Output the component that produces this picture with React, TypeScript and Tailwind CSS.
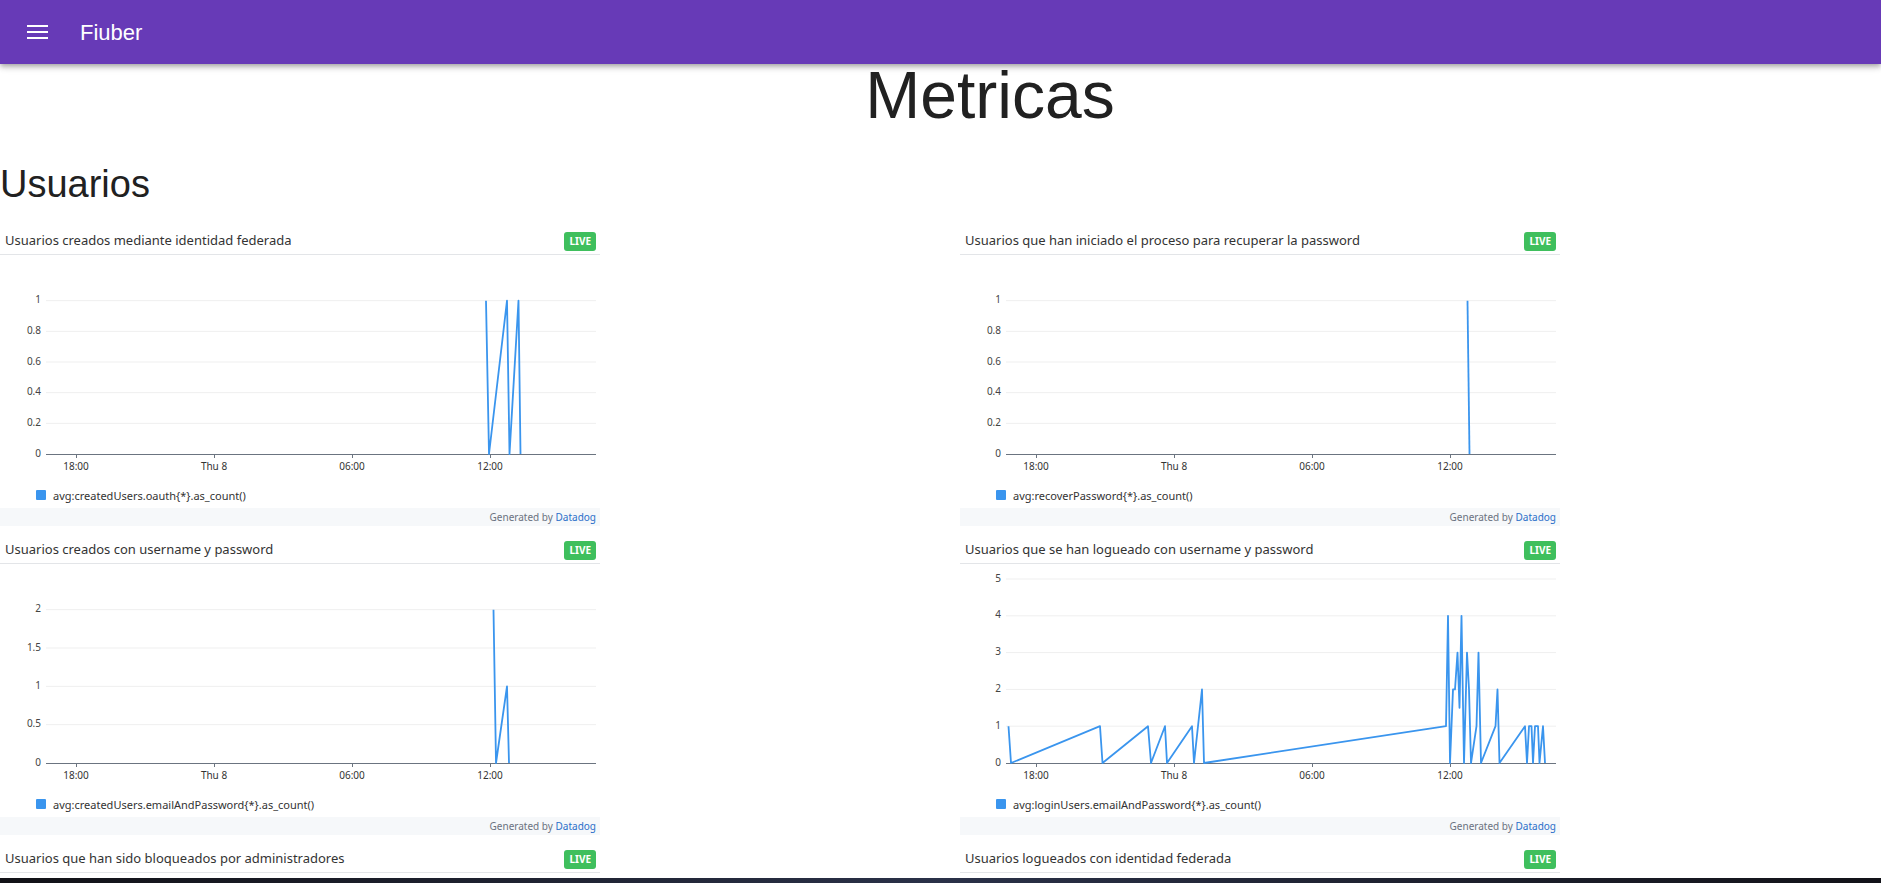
type Pt = [number, number];

interface Metric {
  title: string;
  query: string;
  max: number;
  ticks: number[];
  points: Pt[];
}

// eje x: 18:00 en x=76, 6h = 138px
const timeLabels: { x: number; label: string }[] = [
  { x: 76, label: "18:00" },
  { x: 214, label: "Thu 8" },
  { x: 352, label: "06:00" },
  { x: 490, label: "12:00" },
];

const metrics: Metric[] = [
  {
    title: "Usuarios creados mediante identidad federada",
    query: "avg:createdUsers.oauth{*}.as_count()",
    max: 1.2,
    ticks: [0, 0.2, 0.4, 0.6, 0.8, 1],
    points: [[486, 1], [489, 0], [507, 1], [509.5, 0], [518.5, 1], [520.5, 0]],
  },
  {
    title: "Usuarios que han iniciado el proceso para recuperar la password",
    query: "avg:recoverPassword{*}.as_count()",
    max: 1.2,
    ticks: [0, 0.2, 0.4, 0.6, 0.8, 1],
    points: [[507.5, 1], [509.5, 0]],
  },
  {
    title: "Usuarios creados con username y password",
    query: "avg:createdUsers.emailAndPassword{*}.as_count()",
    max: 2.4,
    ticks: [0, 0.5, 1, 1.5, 2],
    points: [[493.5, 2], [496, 0], [507, 1], [509, 0]],
  },
  {
    title: "Usuarios que se han logueado con username y password",
    query: "avg:loginUsers.emailAndPassword{*}.as_count()",
    max: 5,
    ticks: [0, 1, 2, 3, 4, 5],
    points: [
      [48.5, 1], [51, 0], [140, 1], [142.5, 0], [188, 1], [191, 0], [205, 1], [207, 0],
      [232, 1], [234, 0], [242, 2], [244, 0], [486, 1], [488, 4], [490, 0], [493, 2],
      [495, 2], [497.5, 3], [499.5, 1.5], [501.5, 4], [504, 0], [507, 3], [509, 2], [511, 0],
      [516.5, 1], [518.5, 3], [521, 0], [535.5, 1], [537.5, 2], [539.5, 0], [565, 1],
      [567, 0], [569, 1], [571.5, 1], [573, 0], [575, 1], [578, 1], [579.5, 0], [583, 1], [585, 0],
    ],
  },
  {
    title: "Usuarios que han sido bloqueados por administradores",
    query: "avg:blockedUsers{*}.as_count()",
    max: 1.2,
    ticks: [0, 0.2, 0.4, 0.6, 0.8, 1],
    points: [[500, 1], [502, 0]],
  },
  {
    title: "Usuarios logueados con identidad federada",
    query: "avg:loginUsers.oauth{*}.as_count()",
    max: 1.2,
    ticks: [0, 0.2, 0.4, 0.6, 0.8, 1],
    points: [[490, 1], [492, 0]],
  },
];

const AXIS_Y = 200;
const PLOT_H = 184;

const MetricCard = ({ metric }: { metric: Metric }) => {
  const toY = (v: number) => AXIS_Y - (v * PLOT_H) / metric.max;
  const line = metric.points.map(([x, v]) => `${x},${toY(v)}`).join(" ");

  return (
    <div className="w-[600px] mb-[11px] font-['Noto_Sans',sans-serif]">
      {/* titulo + badge */}
      <div className="h-[27px] flex items-center justify-between pl-[5px] pr-[4px] border-b border-[#e3e5e8]">
        <span className="text-[13px] text-[#333333]">{metric.title}</span>
        <span className="h-[19px] px-[5px] flex items-center rounded-[3px] bg-[#3fbf5d] text-white text-[10px] font-bold">
          LIVE
        </span>
      </div>

      {/* grafico */}
      <svg width={600} height={227} className="block font-['Noto_Sans',sans-serif]">
        {metric.ticks.map((t) => (
          <g key={t}>
            {t > 0 && <line x1={46} x2={596} y1={toY(t) - 1} y2={toY(t) - 1} stroke="#efefef" strokeWidth={1} />}
            <text x={41} y={toY(t) - 1} textAnchor="end" dominantBaseline="middle" fontSize={10} fill="#444">
              {String(t)}
            </text>
          </g>
        ))}
        <line x1={46} x2={596} y1={AXIS_Y - 0.5} y2={AXIS_Y - 0.5} stroke="#6b7480" strokeWidth={1.2} />
        {timeLabels.map((t) => (
          <g key={t.label}>
            <line x1={t.x + 0.5} x2={t.x + 0.5} y1={AXIS_Y - 1} y2={AXIS_Y + 3} stroke="#6b7480" strokeWidth={1} />
            <text x={t.x} y={AXIS_Y + 12} textAnchor="middle" dominantBaseline="middle" fontSize={10} fill="#333">
              {t.label}
            </text>
          </g>
        ))}
        <polyline
          points={line}
          fill="none"
          stroke="#3a95ee"
          strokeWidth={1.8}
          strokeLinejoin="round"
          transform="translate(0,-1)"
        />
      </svg>

      {/* leyenda */}
      <div className="h-[26px] flex items-start pt-[6px] pl-[36px] gap-[7px]">
        <span className="w-[10px] h-[10px] mt-[2px] rounded-[1px] bg-[#3a95ee]" />
        <span className="text-[11px] leading-[15px] text-[#333333]">{metric.query}</span>
      </div>

      {/* footer datadog */}
      <div className="h-[18px] bg-[#f6f8fa] flex items-center justify-end pr-[4px] text-[10px]">
        <span className="text-[#6b7280]">Generated by&nbsp;</span>
        <span className="text-[#2b6fc9]">Datadog</span>
      </div>
    </div>
  );
};

const App = () => {
  return (
    <div className="h-[883px] overflow-hidden flex flex-col bg-white">
      <header className="relative z-10 h-16 shrink-0 bg-[#673ab7] flex items-center px-6 shadow-[0_2px_4px_-1px_rgba(0,0,0,0.2),0_4px_5px_0_rgba(0,0,0,0.14),0_1px_10px_0_rgba(0,0,0,0.12)]">
        <svg width={24} height={24} viewBox="0 0 24 24" fill="white">
          <rect x={3} y={5} width={21} height={2} />
          <rect x={3} y={11} width={21} height={2} />
          <rect x={3} y={17} width={21} height={2} />
        </svg>
        <span className="ml-8 text-[22px] text-white font-['Liberation_Sans',Arial,sans-serif]">Fiuber</span>
      </header>

      <main className="flex-1 min-h-0 font-['Liberation_Sans',Arial,sans-serif] text-[#212121]">
        <div className="flex justify-center pl-[99px]">
          <h1 className="text-[66px] leading-[62px]">Metricas</h1>
        </div>
        <h2 className="mt-[35px] text-[38px] leading-[46px]">Usuarios</h2>

        <div className="mt-[21px] grid grid-cols-[960px_600px]">
          {metrics.map((m) => (
            <MetricCard key={m.title} metric={m} />
          ))}
        </div>
      </main>

      <div className="relative z-10 h-[5px] shrink-0 bg-gradient-to-r from-[#111116] via-[#2a3148] to-[#121218]" />
    </div>
  );
};

export default App;
